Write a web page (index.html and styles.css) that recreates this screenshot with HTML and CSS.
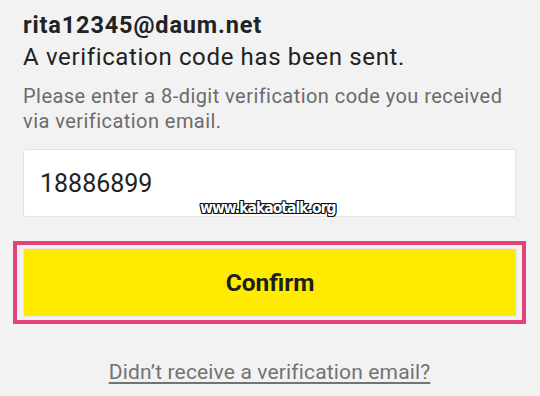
FILE: index.html
```html
<!DOCTYPE html>
<html>
<head>
<meta charset="utf-8">
<link rel="stylesheet" href="styles.css">
</head>
<body>
<div class="page">
  <div class="email">rita12345@daum.net</div>
  <div class="sent">A verification code has been sent.</div>
  <p class="hint">Please enter a 8-digit verification code you received via verification email.</p>
  <div class="field-wrap">
    <div class="field">18886899</div>
    <span class="watermark">www.kakaotalk.org</span>
  </div>
  <div class="highlight">
    <button class="confirm">Confirm</button>
  </div>
  <div class="link-row"><a class="resend" href="#">Didn’t receive a verification email?</a></div>
</div>
</body>
</html>
```
FILE: styles.css
```css
html, body {
  margin: 0;
  padding: 0;
  background: #f2f2f2;
}
.page {
  width: 540px;
  height: 396px;
  box-sizing: border-box;
  padding: 11px 24px 0 23px;
  font-family: Roboto, "Noto Sans", sans-serif;
  color: #222;
  overflow: hidden;
}
.email {
  font-size: 23.5px;
  font-weight: 700;
  line-height: 28px;
  letter-spacing: 0.85px;
}
.sent {
  font-size: 24px;
  line-height: 32px;
  margin-top: 2px;
  letter-spacing: 0.65px;
}
.hint {
  margin: 11px 0 0;
  font-size: 20px;
  line-height: 25px;
  letter-spacing: 0.45px;
  color: #6b6b6b;
}
.field-wrap {
  position: relative;
  margin-top: 15px;
}
.field {
  background: #fff;
  border: 1px solid #e4e4e4;
  border-radius: 2px;
  box-sizing: border-box;
  height: 68px;
  padding: 0 16px;
  display: flex;
  align-items: center;
  font-size: 25px;
  color: #222;
}
.watermark {
  position: absolute;
  left: 177px;
  top: 50px;
  font-family: "DejaVu Sans Condensed", "DejaVu Sans", sans-serif;
  font-weight: 700;
  font-size: 15.5px;
  letter-spacing: -0.95px;
  color: #fff;
  text-shadow: -1px -1px 0 #111, 1px -1px 0 #111, -1px 1px 0 #111, 1px 1px 0 #111, 0 1px 0 #111, 0 -1px 0 #111, 1px 0 0 #111, -1px 0 0 #111;
}
.highlight {
  margin: 24px -10px 0 -10px;
  border: 4px solid #e4427a;
  padding: 4px 6px 4px 7px;
}
.confirm {
  display: block;
  width: 100%;
  height: 67px;
  border: 0;
  background: #ffeb00;
  box-shadow: 0 0 2px rgba(0,0,0,0.12);
  font-family: Roboto, "Noto Sans", sans-serif;
  font-weight: 700;
  font-size: 24.5px;
  color: #1e1e1e;
  padding: 0;
}
.link-row {
  margin-top: 36px;
  text-align: center;
}
.resend {
  font-size: 21px;
  letter-spacing: 0.15px;
  color: #737373;
  text-decoration: underline;
  text-underline-offset: 3px;
}
```
